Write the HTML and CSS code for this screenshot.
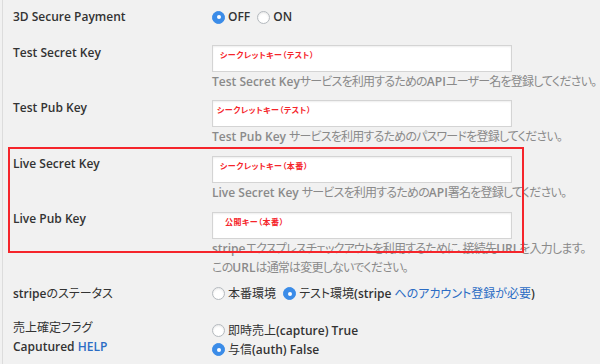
FILE: index.html
```html
<!DOCTYPE html>
<html lang="ja">
<head>
    <meta charset="UTF-8">
    <meta name="viewport" content="width=device-width, initial-scale=1.0">
    <title>Stripe 設定</title>
    <link rel="stylesheet" href="styles.css">
</head>
<body>

<div class="settings">

    <div class="row row-first">
        <div class="th">3D Secure Payment</div>
        <div class="td">
            <label class="choice"><span class="radio checked"></span>OFF</label>
            <label class="choice"><span class="radio"></span>ON</label>
        </div>
    </div>

    <div class="row row-key">
        <div class="th">Test Secret Key</div>
        <div class="td">
            <div class="input"><span class="ph">シークレットキー（テスト）</span></div>
            <p class="desc"><span class="en">Test Secret Key</span>サービスを利用するための<span class="en">API</span>ユーザー名を登録してください。</p>
        </div>
    </div>

    <div class="row row-key">
        <div class="th">Test Pub Key</div>
        <div class="td">
            <div class="input"><span class="ph ph-tight">シークレットキー（テスト）</span></div>
            <p class="desc"><span class="en">Test Pub Key </span>サービスを利用するためのパスワードを登録してください。</p>
        </div>
    </div>

    <!-- live keys, marked with a red box -->
    <div class="live-keys">
        <div class="row row-key">
            <div class="th">Live Secret Key</div>
            <div class="td">
                <div class="input"><span class="ph">シークレットキー（本番）</span></div>
                <p class="desc"><span class="en">Live Secret Key </span>サービスを利用するための<span class="en">API</span>署名を登録してください。</p>
            </div>
        </div>

        <div class="row row-key">
            <div class="th">Live Pub Key</div>
            <div class="td">
                <div class="input"><span class="ph ph-wide">公開キー（本番）</span></div>
                <p class="desc"><span class="en">stripe</span>エクスプレスチェックアウトを利用するために、接続先<span class="en">URL</span>を入力します。<br>この<span class="en">URL</span>は通常は変更しないでください。</p>
            </div>
        </div>
    </div>

    <div class="row row-status">
        <div class="th">stripe<span class="ja">のステータス</span></div>
        <div class="td">
            <label class="choice"><span class="radio"></span><span class="ja">本番環境</span></label>
            <label class="choice"><span class="radio checked"></span><span class="ja">テスト環境</span>(stripe&nbsp;<a href="#" class="ja">へのアカウント登録が必要</a>)</label>
        </div>
    </div>

    <div class="row row-flag">
        <div class="th"><span class="ja">売上確定フラグ</span><br>Caputured <a href="#">HELP</a></div>
        <div class="td">
            <label class="choice line"><span class="radio"></span><span class="ja">即時売上</span>(capture) True</label>
            <label class="choice line"><span class="radio checked"></span><span class="ja">与信</span>(auth) False</label>
        </div>
    </div>

</div>

</body>
</html>
```

FILE: styles.css
```css
html, body {
    overflow: hidden;
}
body {
    font-family: "Open Sans", "Noto Sans CJK JP", sans-serif;
    font-feature-settings: "palt";
    font-size: 12px;
    color: #333;
    background-color: #f1f1f1;
    margin: 0;
    padding: 0;
}
a {
    color: #2b6cc4;
    text-decoration: none;
}
.ja {
    font-weight: 400;
}
.settings {
    margin-left: 2px;
    border-left: 1px solid #dcdcdc;
    min-height: 364px;
}
.row {
    display: flex;
}
.th {
    width: 209px;
    flex-shrink: 0;
    padding-left: 10px;
    box-sizing: border-box;
    font-weight: 600;
    line-height: 18px;
}
.td {
    flex: 1;
    min-width: 0;
}
.row-first {
    padding-top: 8px;
}
.row-key {
    margin-top: 10px;
}
.row-key .th {
    margin-top: -1px;
}
.row-first + .row-key {
    margin-top: 17px;
}
.row-key + .row-key {
    margin-top: 9px;
}
.live-keys {
    position: relative;
}
.live-keys .row-key {
    margin-top: 10px;
}
.live-keys .row-key + .row-key .th {
    margin-top: -2px;
}
.live-keys::after {
    content: "";
    position: absolute;
    top: -9px;
    left: 5px;
    width: 516px;
    height: 106px;
    border: 2px solid #f5252b;
    box-sizing: border-box;
}
.row-status {
    margin-top: 8px;
}
.row-flag {
    margin-top: 14px;
}
.row-flag .th {
    line-height: 19px;
}
.row-flag .td {
    padding-top: 3px;
}
.input {
    width: 300px;
    height: 27px;
    box-sizing: border-box;
    background-color: #fff;
    border: 1px solid #d4d4d4;
    box-shadow: inset 0 1px 2px rgba(0,0,0,0.07);
    padding: 4px 0 0 7px;
}
.ph {
    display: block;
    color: #f5252b;
    font-size: 8px;
    font-weight: 700;
    line-height: 10px;
    letter-spacing: 0.5px;
}
.ph-tight {
    margin-left: -3px;
}
.ph-wide {
    margin-left: 5px;
}
.desc {
    margin: 0;
    color: #8a8a8a;
    line-height: 19px;
    letter-spacing: -0.8px;
    white-space: nowrap;
}
.desc .en {
    font-weight: 600;
    letter-spacing: 0;
}
.choice {
    display: inline-flex;
    align-items: center;
    font-weight: 600;
    line-height: 18px;
    margin-right: 4px;
}
.choice.line {
    display: flex;
    line-height: 19px;
}
.radio {
    width: 13px;
    height: 13px;
    border-radius: 50%;
    border: 1px solid #b4b9be;
    background-color: #fff;
    box-shadow: inset 0 1px 2px rgba(0,0,0,0.1);
    box-sizing: border-box;
    margin-right: 3px;
    position: relative;
}
.radio.checked {
    background-color: #3b8ce8;
    border-color: #3b8ce8;
    box-shadow: none;
}
.radio.checked::before {
    content: "";
    position: absolute;
    top: 50%;
    left: 50%;
    width: 4px;
    height: 4px;
    margin: -2px 0 0 -2px;
    border-radius: 50%;
    background-color: #fff;
}
```
